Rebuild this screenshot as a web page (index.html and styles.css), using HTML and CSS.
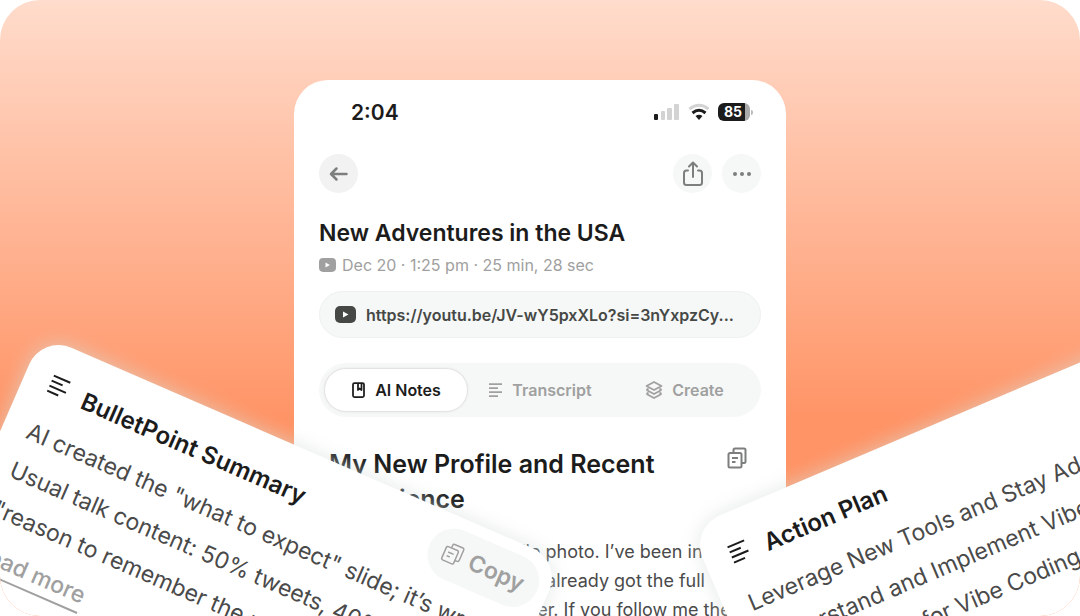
FILE: index.html
```html
<!DOCTYPE html>
<html lang="en">
<head>
<meta charset="utf-8">
<meta name="viewport" content="width=device-width, initial-scale=1">
<title>AI Notes</title>
<link rel="stylesheet" href="styles.css">
</head>
<body>
<svg class="defs" aria-hidden="true">
  <symbol id="copy" viewBox="0 0 20 22"><path d="M6.500 5.500V3A1.500 1.500 0 0 1 8 1.500H17A1.500 1.500 0 0 1 18.500 3V14.500A1.500 1.500 0 0 1 17 16H14.500M3 6H13A1.500 1.500 0 0 1 14.500 7.500V19A1.500 1.500 0 0 1 13 20.500H3A1.500 1.500 0 0 1 1.500 19V7.500A1.500 1.500 0 0 1 3 6ZM5 11H11M5 15H8.500"/></symbol>
  <symbol id="lines" viewBox="0 0 22 22"><path d="M2 2.500H20M2 8H14M2 13.500H20M2 19H14"/></symbol>
  <symbol id="video" viewBox="0 0 21 17"><rect width="21" height="17" rx="5"/><path fill="#fff" d="M8 5.500v6l5.500-3z"/></symbol>
</svg>
<main class="stage">
  <section class="phone">
    <div class="status">
      <span class="time">2:04</span>
      <span class="signals">
        <svg width="26" height="18" viewBox="0 0 26 18"><rect x="0" y="11" width="4" height="6" rx="1" fill="#1c1c1c"/><g fill="#d3d3d3"><rect x="7" y="8" width="4" height="9" rx="1"/><rect x="13" y="5" width="5" height="12" rx="1"/><rect x="20" y="1" width="5" height="16" rx="1"/></g></svg>
        <svg width="22" height="18" viewBox="0 0 22 18" fill="none" stroke-width="3"><path stroke="#d3d3d3" d="M1.500 6Q11-1.500 20.500 6"/><path stroke="#1c1c1c" d="M4.500 10Q11 4.500 17.500 10"/><path fill="#1c1c1c" d="M7.500 13q3.500-2.500 7 0L11 17z"/></svg>
        <span class="battery">85</span>
      </span>
    </div>
    <nav class="toolbar">
      <button class="round back" aria-label="Back"><svg width="20" height="16" viewBox="0 0 20 16"><path d="M7.500 2.500 2 8l5.500 5.500M2.500 8H17.500"/></svg></button>
      <span class="actions">
        <button class="round" aria-label="Share"><svg class="share" width="22" height="26" viewBox="0 0 22 26"><path d="M6 9.500H4.500A2.500 2.500 0 0 0 2 12v9.500A2.500 2.500 0 0 0 4.500 24h13a2.500 2.500 0 0 0 2.500-2.500V12a2.500 2.500 0 0 0-2.500-2.500H16M11 16V2M7 5.500 11 1.500 15 5.500"/></svg></button>
        <button class="round" aria-label="More"><svg class="dots" width="20" height="6" viewBox="0 0 20 6"><circle cx="3" cy="3" r="2"/><circle cx="10" cy="3" r="2"/><circle cx="17" cy="3" r="2"/></svg></button>
      </span>
    </nav>
    <h1 class="title">New Adventures in the USA</h1>
    <p class="meta"><svg class="meta-icon" viewBox="0 0 21 17"><use href="#video"/></svg>Dec 20 · 1:25 pm · 25 min, 28 sec</p>
    <a class="link" href="#"><svg class="link-icon"><use href="#video"/></svg><span>https://youtu.be/JV-wY5pxXLo?si=3nYxpzCy...</span></a>
    <div class="tabs" role="tablist">
      <button class="tab active" role="tab" aria-selected="true"><svg width="16" height="18" viewBox="0 0 16 18"><path d="M3.500 2h8A1.500 1.500 0 0 1 13 3.500v11a1.500 1.500 0 0 1-1.500 1.500h-8A1.500 1.500 0 0 1 2 14.500v-11A1.500 1.500 0 0 1 3.500 2ZM7 2v7l1.500-1.500L10.500 9V2"/></svg>AI Notes</button>
      <button class="tab" role="tab"><svg width="16" height="16" viewBox="0 0 16 16"><path d="M1 2h13M1 6h9M1 10h13M1 14h9"/></svg>Transcript</button>
      <button class="tab" role="tab"><svg width="20" height="20" viewBox="0 0 20 20"><path d="m10 2 7.500 4-7.500 4-7.500-4zM2.500 10l7.500 4 7.500-4M2.500 14l7.500 4 7.500-4M2.500 10l2-1.500M17.500 10l-2-1.500M2.500 14l2-1.500M17.500 14l-2-1.500"/></svg>Create</button>
    </div>
    <article class="note">
      <header class="note-head">
        <h2>My New Profile and Recent Experience</h2>
        <button class="plain" aria-label="Copy note"><svg class="copy-icon"><use href="#copy"/></svg></button>
      </header>
      <p>I’ve just set a new profile photo. I’ve been in<br>the USA a while now and already got the full<br>tour of San Diego together. If you follow me the</p>
    </article>
  </section>

  <section class="card left">
    <header class="card-head">
      <svg class="lines"><use href="#lines"/></svg>
      <h3>BulletPoint Summary</h3>
      <button class="copy"><svg class="copy-icon"><use href="#copy"/></svg>Copy</button>
    </header>
    <p>AI created the "what to expect" slide; it’s wrong<br>Usual talk content: 50% tweets, 40% stories<br>"reason to remember the reader"</p>
    <a class="more" href="#">Read more</a>
  </section>

  <section class="card right">
    <header class="card-head">
      <svg class="lines"><use href="#lines"/></svg>
      <h3>Action Plan</h3>
    </header>
    <p>Leverage New Tools and Stay Adaptive<br>Understand and Implement Vibe Coding<br>Explore Tools for Vibe Coding</p>
  </section>
</main>
</body>
</html>
```
FILE: styles.css
```css
* { box-sizing: border-box; }
body { margin: 0; background: #fff; font-family: Inter, "Liberation Sans", sans-serif; color: #1c1c1c; }
h1, h2, h3, p { margin: 0; }
button { border: 0; padding: 0; background: none; font: inherit; color: inherit; }
svg { display: block; flex: none; }
.defs { position: absolute; width: 0; height: 0; }

.stage {
  position: relative;
  display: flex;
  justify-content: center;
  height: 100vh;
  padding-top: 80px;
  overflow: hidden;
  border-radius: 40px;
  background: linear-gradient(#ffdccc 0, #ff9466 68%);
}

.phone {
  width: 492px;
  height: 640px;
  flex: none;
  padding: 19px 25px;
  border-radius: 34px;
  background: #fff;
}
.status { display: flex; justify-content: space-between; align-items: center; padding: 0 11px 0 32px; height: 26px; }
.time { font-size: 21px; font-weight: 600; }
.signals { display: flex; align-items: center; gap: 8px; }
.battery {
  position: relative;
  width: 32px;
  height: 18px;
  padding-right: 2px;
  border-radius: 6px;
  background: linear-gradient(90deg, #1c1c1c 27px, #aaa 27px);
  color: #fff;
  font-size: 14px;
  font-weight: 700;
  line-height: 18px;
  text-align: center;
}
.battery::after { content: ""; position: absolute; right: -3px; top: 7px; width: 2px; height: 5px; border-radius: 0 2px 2px 0; background: #bbb; }

.toolbar { display: flex; justify-content: space-between; margin-top: 29px; }
.actions { display: flex; gap: 10px; }
.round { display: grid; place-items: center; width: 39px; height: 39px; border-radius: 50%; background: #f6f8f7; }
.round svg { fill: none; stroke: #7d7f7e; stroke-width: 2.5; stroke-linecap: round; stroke-linejoin: round; }
.round .share { stroke-width: 2; }
.round .dots { fill: #7d7f7e; stroke: none; }
.back { background: #f2f2f2; }

.title { margin-top: 24px; font-size: 23px; line-height: 32px; font-weight: 600; white-space: nowrap; }
.meta { display: flex; align-items: center; gap: 6px; margin-top: 5px; font-size: 16px; line-height: 22px; color: #a0a0a0; white-space: nowrap; }
.meta-icon { width: 17px; height: 14px; fill: #a0a0a0; }
.link {
  display: flex;
  align-items: center;
  gap: 10px;
  height: 47px;
  margin-top: 15px;
  padding: 0 15px;
  border: 1px solid #eff1f0;
  border-radius: 24px;
  background: #f6f8f7;
  color: #464846;
  font-size: 16px;
  font-weight: 600;
  text-decoration: none;
  white-space: nowrap;
}
.link-icon { width: 21px; height: 17px; fill: #464846; }
.tabs { display: grid; grid-template-columns: 144px 1fr 1fr; height: 54px; margin-top: 25px; padding: 5px; border-radius: 27px; background: #f6f8f7; }
.tab { display: flex; align-items: center; justify-content: center; gap: 8px; border-radius: 22px; color: #a0a0a0; font-size: 16px; font-weight: 600; }
.tab svg { fill: none; stroke: currentColor; stroke-width: 1.75; stroke-linejoin: round; }
.tab.active { border: 1px solid #e4e4e4; background: #fff; color: #1c1c1c; box-shadow: 0 0 3px #0001; }

.note { padding: 30px 14px 0 10px; }
.note-head { display: flex; align-items: flex-start; justify-content: space-between; }
.note h2 { width: 350px; font-size: 25px; line-height: 35px; font-weight: 600; }
.note p { margin-top: 20px; color: #4a4a4a; font-size: 18px; line-height: 29px; white-space: nowrap; }
.copy-icon { width: 20px; height: 22px; fill: none; stroke: #7d7f7e; stroke-width: 2; }

.card {
  position: absolute;
  width: 567px;
  height: 420px;
  padding: 11px 11px 0 25px;
  border-radius: 32px;
  background: #fff;
  box-shadow: 0 0 20px #d5e0daaa;
  transform-origin: 0 0;
}
.left { left: 42px; top: 335px; transform: rotate(23.5deg); }
.right { left: 690px; top: 528px; transform: rotate(-23deg); }
.card-head { display: flex; align-items: center; height: 52px; margin-bottom: 9px; }
.card-head h3 { flex: 1; padding-top: 14px; margin-left: 16px; font-size: 24px; line-height: 32px; font-weight: 600; }
.lines { width: 22px; height: 22px; margin-top: 8px; fill: none; stroke: #1c1c1c; stroke-width: 2; }
.card p { color: #4a4a4a; font-size: 23px; line-height: 42px; white-space: nowrap; }
.copy { display: flex; align-items: center; justify-content: center; gap: 8px; width: 117px; height: 53px; border-radius: 27px; background: #f6f8f7; color: #a0a0a0; font-size: 23px; font-weight: 600; }
.copy .copy-icon { stroke: #a0a0a0; stroke-width: 1.5; }
.more { display: inline-block; margin-top: 8px; border-bottom: 2px solid #a0a0a0; color: #a0a0a0; font-size: 23px; line-height: 34px; font-weight: 500; text-decoration: none; }
```
